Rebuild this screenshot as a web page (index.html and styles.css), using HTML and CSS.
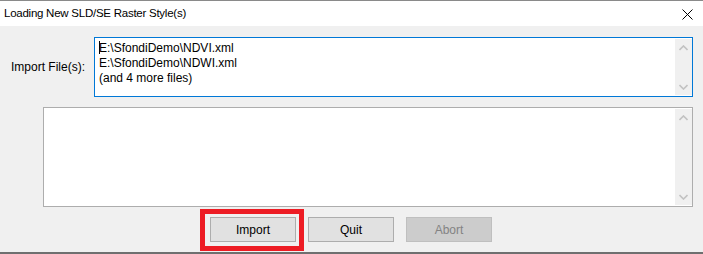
FILE: index.html
```html
<!DOCTYPE html>
<html lang="en">
<head>
    <meta charset="UTF-8">
    <title>Loading New SLD/SE Raster Style(s)</title>
    <link rel="stylesheet" href="styles.css">
</head>
<body>
    <div class="ventana">
        <div class="titulo">
            <span class="titulo-texto">Loading New SLD/SE Raster Style(s)</span>
            <svg class="cerrar" width="11" height="11" viewBox="0 0 11 11">
                <path d="M0.5 0.5 L10.5 10.5 M10.5 0.5 L0.5 10.5" stroke="#000" stroke-width="1" fill="none"/>
            </svg>
        </div>

        <div class="contenido">
            <div class="fila-archivos">
                <span class="etiqueta">Import File(s):</span>
                <div class="caja caja-activa">
                    <div class="lineas">
                        <div><span class="cursor"></span>E:\SfondiDemo\NDVI.xml</div>
                        <div>E:\SfondiDemo\NDWI.xml</div>
                        <div>(and 4 more files)</div>
                    </div>
                    <div class="scroll">
                        <svg width="9" height="6" viewBox="0 0 9 6"><path d="M0.5 5 L4.5 1 L8.5 5" stroke="#c2c2c2" stroke-width="1.6" fill="none"/></svg>
                        <svg width="9" height="6" viewBox="0 0 9 6"><path d="M0.5 1 L4.5 5 L8.5 1" stroke="#c2c2c2" stroke-width="1.6" fill="none"/></svg>
                    </div>
                </div>
            </div>

            <div class="caja caja-log">
                <div class="lineas"></div>
                <div class="scroll">
                    <svg width="9" height="6" viewBox="0 0 9 6"><path d="M0.5 5 L4.5 1 L8.5 5" stroke="#c2c2c2" stroke-width="1.6" fill="none"/></svg>
                    <svg width="9" height="6" viewBox="0 0 9 6"><path d="M0.5 1 L4.5 5 L8.5 1" stroke="#c2c2c2" stroke-width="1.6" fill="none"/></svg>
                </div>
            </div>

            <div class="botones">
                <button class="boton marcado">Import</button>
                <button class="boton">Quit</button>
                <button class="boton" disabled>Abort</button>
            </div>
        </div>
    </div>
</body>
</html>
```

FILE: styles.css
```css
*, *::after {
    margin: 0;
    padding: 0;
    box-sizing: border-box;
}

body {
    background-color: #f0f0f0;
    font-family: "Segoe UI", "Liberation Sans", Arial, sans-serif;
    font-size: 12px;
    color: #000;
}

.ventana {
    width: 703px;
    height: 254px;
    border-top: 1px solid #8a8a8a;
    border-bottom: 2px solid #6f6f6f;
}

.titulo {
    height: 25px;
    background-color: #fff;
    display: flex;
    align-items: center;
    justify-content: space-between;
    padding: 0 10px 1px 4px;
}

.titulo-texto {
    font-size: 11.5px;
    letter-spacing: -0.25px;
}

.cerrar {
    margin-top: 2px;
}

.contenido {
    display: flex;
    flex-direction: column;
    padding: 11px 10px 0 43px;
}

.fila-archivos {
    display: flex;
    align-items: center;
    margin-left: -32px;
}

.etiqueta {
    width: 83px;
}

.caja {
    display: flex;
    background-color: #fff;
    border: 1px solid #adadad;
    padding: 1px 0 1px 0;
}

.caja-activa {
    width: 599px;
    height: 60px;
    border-color: #0078d7;
}

.caja-log {
    width: 650px;
    height: 100px;
    margin-top: 10px;
}

.lineas {
    flex: 1;
    padding: 2px 4px;
    line-height: 15px;
}

.cursor {
    display: inline-block;
    width: 1px;
    height: 13px;
    background-color: #000;
    vertical-align: -2px;
    margin-right: -1px;
}

.scroll {
    width: 17px;
    background-color: #f0f0f0;
    display: flex;
    flex-direction: column;
    justify-content: space-between;
    align-items: center;
    padding: 6px 0 5px 0;
}

.botones {
    display: flex;
    gap: 12px;
    margin: 10px 0 0 167px;
}

.boton {
    width: 86px;
    height: 25px;
    background-color: #e1e1e1;
    border: 1px solid #adadad;
    font-family: inherit;
    font-size: 12px;
    color: #000;
}

.boton[disabled] {
    background-color: #cccccc;
    border-color: #bfbfbf;
    color: #838383;
}

.marcado {
    position: relative;
}

.marcado::after {
    content: "";
    position: absolute;
    left: -11px;
    top: -9px;
    width: 104px;
    height: 42px;
    border: 5px solid #ed1c24;
}
```
